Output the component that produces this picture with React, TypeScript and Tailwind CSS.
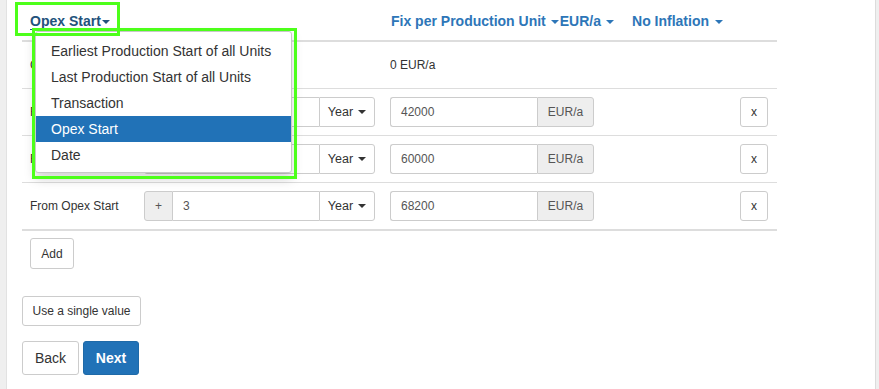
import React from "react";

const FONT = "font-['Liberation_Sans',Arial,sans-serif]";

function Caret({ className = "" }: { className?: string }) {
  return (
    <span
      className={`inline-block w-0 h-0 border-t-[4px] border-x-[4px] border-x-transparent border-t-current align-middle ${className}`}
    />
  );
}

const OPCIONES = [
  "Earliest Production Start of all Units",
  "Last Production Start of all Units",
  "Transaction",
  "Opex Start",
  "Date",
];

const FILAS = [
  { etiqueta: "From Opex Start", offset: "1", valor: "42000" },
  { etiqueta: "From Opex Start", offset: "2", valor: "60000" },
  { etiqueta: "From Opex Start", offset: "3", valor: "68200" },
];

function Fila({ etiqueta, offset, valor }: { etiqueta: string; offset: string; valor: string }) {
  return (
    <div className="grid grid-cols-[114px_246px_350px_45px] h-[47px] items-center border-b border-[#ddd] text-[12px] text-[#333]">
      <div className="pl-[8px]">{etiqueta}</div>
      <div className="pl-[8px] flex h-[30px]">
        <span className="w-[29px] flex items-center justify-center bg-[#eee] border border-[#ccc] rounded-l-[3px] text-[#555]">+</span>
        <span className="w-[146px] flex items-center pl-[10px] border-y border-[#ccc] bg-white text-[#555]">{offset}</span>
        <span className="w-[56px] flex items-center justify-center gap-[5px] border border-[#ccc] rounded-r-[3px] bg-white text-[12.5px]">
          Year
          <Caret />
        </span>
      </div>
      <div className="pl-[8px] flex h-[30px]">
        <span className="w-[147px] flex items-center pl-[10px] border border-r-0 border-[#ccc] rounded-l-[3px] bg-white text-[#555]">{valor}</span>
        <span className="w-[57px] flex items-center justify-center bg-[#eee] border border-[#ccc] rounded-r-[3px] text-[#555]">EUR/a</span>
      </div>
      <div className="pl-[8px] flex">
        <span className="w-[28px] h-[30px] flex items-center justify-center border border-[#ccc] rounded-[3px] bg-white text-[12px]">x</span>
      </div>
    </div>
  );
}

export default function App() {
  return (
    <div className={`flex h-[389px] w-[879px] overflow-hidden bg-white ${FONT}`}>
      <div className="w-[7px] bg-[#efefef] border-r border-[#e2e2e2]" />
      <div className="relative flex-1 pl-[15px]">
        <div className="w-[755px]">
          <div className="grid grid-cols-[114px_246px_350px_45px] h-[42px] items-center border-b-2 border-[#ddd] text-[14px] font-bold text-[#2d76b8]">
            <div className="pl-[8px] pt-[3px] flex items-center">
              <span className="text-[#23527c] border-b border-[#23527c] leading-[16px]">Opex Start</span>
              <Caret className="ml-[1px] text-[#23527c]" />
            </div>
            <div />
            <div className="col-span-2 pl-[9px] pt-[3px] flex items-center whitespace-nowrap">
              <span>Fix per Production Unit</span>
              <Caret className="ml-[5px]" />
              <span className="ml-[1px]">EUR/a</span>
              <Caret className="ml-[5px]" />
              <span className="ml-[18px]">No Inflation</span>
              <Caret className="ml-[6px]" />
            </div>
          </div>
          <div className="grid grid-cols-[114px_246px_350px_45px] h-[47px] items-center border-b border-[#ddd] text-[12px] text-[#333]">
            <div className="pl-[8px]">Opex Start</div>
            <div />
            <div className="pl-[8px]">0 EUR/a</div>
          </div>
          {FILAS.map((f, i) => (
            <Fila key={i} {...f} />
          ))}
          <div className="border-b border-[#ddd] -mt-px h-[2px]" />
          <div className="pl-[8px] pt-[7px]">
            <button className="h-[31px] w-[44px] border border-[#ccc] rounded-[3px] bg-white text-[12px] text-[#333]">Add</button>
          </div>
        </div>
        <div className="mt-[27px]">
          <button className="h-[30px] w-[119px] border border-[#ccc] rounded-[3px] bg-white text-[12px] text-[#333]">Use a single value</button>
        </div>
        <div className="mt-[15px] flex gap-[4px]">
          <button className="h-[34px] w-[57px] border border-[#ccc] rounded-[3px] bg-white text-[14px] text-[#333]">Back</button>
          <button className="h-[34px] w-[56px] border border-[#1f6aa8] rounded-[3px] bg-[#2172b7] text-[14px] font-bold text-white">Next</button>
        </div>

        <div className="absolute left-[28px] top-[31px] w-[257px] bg-white border border-[#c8c8c8] rounded-[3px] shadow-[0_6px_12px_rgba(0,0,0,0.175)] pt-[6px] pb-[4px] text-[14px] text-[#333]">
          {OPCIONES.map((o) => (
            <div
              key={o}
              className={`h-[26px] flex items-center pl-[15px] whitespace-nowrap ${o === "Opex Start" ? "bg-[#2172b7] text-white" : ""}`}
            >
              {o}
            </div>
          ))}
        </div>
        <div className="absolute left-[8px] top-[2px] w-[105px] h-[34px] border-[3px] border-[#4dff1a] pointer-events-none" />
        <div className="absolute left-[25px] top-[28px] w-[265px] h-[151px] border-[3px] border-[#4dff1a] pointer-events-none" />
      </div>
      <div className="w-[4px] bg-[#efefef] border-l border-[#dcdcdc]" />
    </div>
  );
}
